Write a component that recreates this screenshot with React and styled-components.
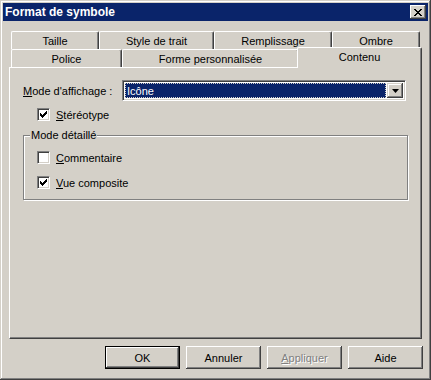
import React from "react";
import styled, { createGlobalStyle } from "styled-components";

const Global = createGlobalStyle`
  html, body {
    margin: 0;
    padding: 0;
    background: #d4d0c8;
  }
  body {
    font-family: "Liberation Sans", Arial, sans-serif;
    font-size: 11px;
    color: #000;
  }
`;

const Window = styled.div`
  width: 431px;
  height: 380px;
  box-sizing: border-box;
  padding: 3px;
  background: #d4d0c8;
  box-shadow: inset -1px -1px #404040, inset 1px 1px #d4d0c8,
    inset -2px -2px #808080, inset 2px 2px #fff;
  display: flex;
  flex-direction: column;
`;

const TitleBar = styled.div`
  height: 18px;
  background: #0a246a;
  color: #fff;
  display: flex;
  align-items: center;
  justify-content: space-between;
  padding: 0 2px 0 2px;
`;

const Title = styled.span`
  font-weight: bold;
  font-size: 12px;
`;

const CloseButton = styled.div`
  width: 16px;
  height: 14px;
  box-sizing: border-box;
  background: #d4d0c8;
  box-shadow: inset -1px -1px #404040, inset 1px 1px #fff,
    inset -2px -2px #808080, inset 2px 2px #d4d0c8;
  display: flex;
  align-items: center;
  justify-content: center;
`;

const Body = styled.div`
  flex: 1;
  display: flex;
  flex-direction: column;
  padding: 10px 6px 0 6px;
`;

const TabRows = styled.div`
  display: flex;
  flex-direction: column;
  padding: 0 2px;
`;

const TabRow = styled.div`
  display: flex;
  height: 18px;
`;

const Tab = styled.div`
  width: ${(p) => p.$w}px;
  box-sizing: border-box;
  border-top: 1px solid #fff;
  border-left: 1px solid #fff;
  border-right: 1px solid #404040;
  border-radius: 2px 2px 0 0;
  box-shadow: inset -1px 0 #808080;
  display: flex;
  align-items: center;
  justify-content: center;
  padding-top: 1px;
  background: #d4d0c8;
  white-space: nowrap;
`;

const ActiveTab = styled(Tab)`
  position: relative;
  z-index: 1;
  width: ${(p) => p.$w + 4}px;
  margin: -2px -2px -1px -2px;
  height: 21px;
  padding-top: 0;
  padding-bottom: 3px;
`;

const Panel = styled.div`
  height: 272px;
  box-sizing: border-box;
  border-top: 1px solid #fff;
  border-left: 1px solid #fff;
  border-right: 1px solid #404040;
  border-bottom: 1px solid #404040;
  box-shadow: inset -1px -1px #808080;
  padding: 12px 13px;
  display: flex;
  flex-direction: column;
  align-items: flex-start;
`;

const FieldRow = styled.div`
  display: flex;
  align-items: center;
  height: 21px;
`;

const Label = styled.span`
  width: 99px;
  flex: none;
`;

const Combo = styled.div`
  width: 284px;
  height: 21px;
  box-sizing: border-box;
  background: #fff;
  border: 1px solid;
  border-color: #808080 #fff #fff #808080;
  box-shadow: inset 1px 1px #404040, inset -1px -1px #d4d0c8;
  padding: 2px;
  display: flex;
  gap: 1px;
`;

const ComboValue = styled.div`
  flex: 1;
  background: #0a246a;
  color: #fff;
  display: flex;
  align-items: center;
  padding-left: 2px;
  outline: 1px dotted #d4d0c8;
  outline-offset: -1px;
`;

const DropButton = styled.div`
  width: 16px;
  box-sizing: border-box;
  background: #d4d0c8;
  box-shadow: inset -1px -1px #404040, inset 1px 1px #d4d0c8,
    inset -2px -2px #808080, inset 2px 2px #fff;
  display: flex;
  align-items: center;
  justify-content: center;
`;

const CheckRow = styled.div`
  display: flex;
  align-items: center;
  gap: 6px;
  height: 13px;
  margin-top: ${(p) => p.$mt || 0}px;
  padding-left: ${(p) => p.$pl || 0}px;
`;

const Box = styled.div`
  width: 13px;
  height: 13px;
  box-sizing: border-box;
  background: #fff;
  border: 1px solid;
  border-color: #808080 #fff #fff #808080;
  box-shadow: inset 1px 1px #404040, inset -1px -1px #d4d0c8;
  display: flex;
  align-items: center;
  justify-content: center;
`;

const Group = styled.div`
  position: relative;
  width: 385px;
  box-sizing: border-box;
  margin-top: 14px;
  border: 1px solid #808080;
  box-shadow: inset 1px 1px #fff, 1px 1px #fff;
  padding: 15px 0 10px 13px;
  display: flex;
  flex-direction: column;
`;

const Legend = styled.span`
  position: absolute;
  top: -7px;
  left: 6px;
  padding: 0 1px;
  background: #d4d0c8;
`;

const Footer = styled.div`
  display: flex;
  justify-content: flex-end;
  gap: 6px;
  margin: 7px -1px 0 0;
`;

const Button = styled.div`
  width: 75px;
  height: 23px;
  box-sizing: border-box;
  display: flex;
  align-items: center;
  justify-content: center;
  background: #d4d0c8;
  border: ${(p) => (p.$default ? "1px solid #000" : "none")};
  box-shadow: inset -1px -1px #404040, inset 1px 1px #fff,
    inset -2px -2px #808080, inset 2px 2px #d4d0c8;
  color: ${(p) => (p.$disabled ? "#808080" : "#000")};
  text-shadow: ${(p) => (p.$disabled ? "1px 1px #fff" : "none")};
`;

const U = styled.span`
  text-decoration: underline;
`;

const Check = () => (
  <svg width="7" height="7" viewBox="0 0 7 7">
    <path
      d="M0 2h1v1h1v1h1V3h1V2h1V1h1V0h1v3H6v1H5v1H4v1H3v1H2V6H1V5H0z"
      fill="#000"
    />
  </svg>
);

const CheckBox = ({ checked, children, mt, pl }) => (
  <CheckRow $mt={mt} $pl={pl}>
    <Box>{checked && <Check />}</Box>
    <span>{children}</span>
  </CheckRow>
);

const topTabs = [
  ["Taille", 88],
  ["Style de trait", 115],
  ["Remplissage", 118],
  ["Ombre", 88],
];

export default function App() {
  return (
    <>
      <Global />
      <Window>
        <TitleBar>
          <Title>Format de symbole</Title>
          <CloseButton>
            <svg width="8" height="7" viewBox="0 0 8 7">
              <path
                d="M0 0h2v1h1v1h2V1h1V0h2v1H7v1H6v1H5v1h1v1h1v1h1v1H6V6H5V5H3v1H2v1H0V6h1V5h1V4h1V3H2V2H1V1H0z"
                fill="#000"
              />
            </svg>
          </CloseButton>
        </TitleBar>
        <Body>
          <TabRows>
            <TabRow>
              {topTabs.map(([t, w]) => (
                <Tab key={t} $w={w}>
                  {t}
                </Tab>
              ))}
            </TabRow>
            <TabRow>
              <Tab $w={111}>Police</Tab>
              <Tab $w={177}>Forme personnalisée</Tab>
              <ActiveTab $w={121}>Contenu</ActiveTab>
            </TabRow>
          </TabRows>
          <Panel>
            <FieldRow>
              <Label>
                <U>M</U>ode d'affichage :
              </Label>
              <Combo>
                <ComboValue>Icône</ComboValue>
                <DropButton>
                  <svg width="7" height="4" viewBox="0 0 7 4">
                    <path d="M0 0h7L3.5 4z" fill="#000" />
                  </svg>
                </DropButton>
              </Combo>
            </FieldRow>
            <CheckBox checked mt={7} pl={14}>
              <U>S</U>téréotype
            </CheckBox>
            <Group>
              <Legend>Mode détaillé</Legend>
              <CheckBox>
                <U>C</U>ommentaire
              </CheckBox>
              <CheckBox checked mt={12}>
                <U>V</U>ue composite
              </CheckBox>
            </Group>
          </Panel>
          <Footer>
            <Button $default>OK</Button>
            <Button>Annuler</Button>
            <Button $disabled>
              <U>A</U>ppliquer
            </Button>
            <Button>Aide</Button>
          </Footer>
        </Body>
      </Window>
    </>
  );
}
